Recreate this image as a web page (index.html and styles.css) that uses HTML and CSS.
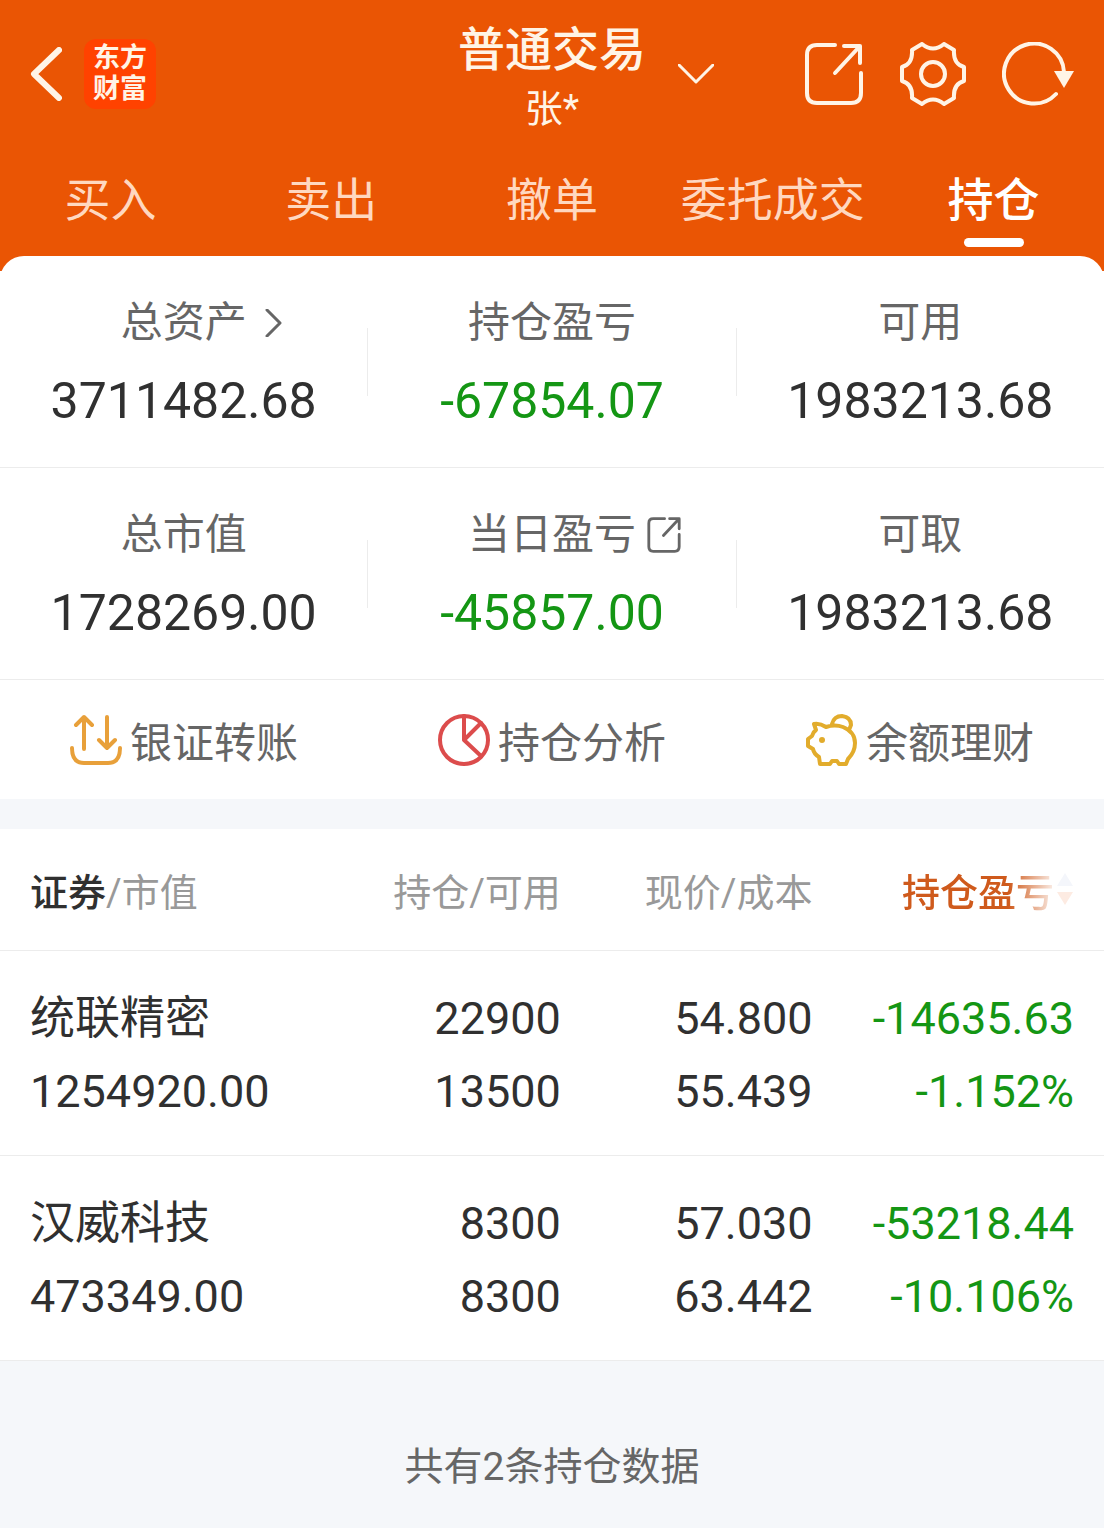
FILE: index.html
```html
<!DOCTYPE html>
<html lang="zh-CN">
<head>
<meta charset="utf-8">
<meta name="viewport" content="width=device-width, initial-scale=1">
<title>普通交易 - 持仓</title>
<link rel="stylesheet" href="styles.css">
</head>
<body>
<header class="header">
  <div class="topbar">
    <div class="topbar-left">
      <button type="button" class="icon-btn" aria-label="返回">
        <svg width="32" height="54" viewBox="0 0 32 54"><path d="M29 3 L4 27 L29 51" stroke-width="6"/></svg>
      </button>
      <a href="#" class="logo">东方<br>财富</a>
    </div>
    <button type="button" class="account">
      <span class="account-text">
        <span class="account-title">普通交易</span>
        <span class="account-name">张*</span>
      </span>
      <svg class="account-arrow" width="36" height="20" viewBox="0 0 36 20"><path d="M1 1 L18 18 L35 1" stroke-width="3"/></svg>
    </button>
    <div class="topbar-right">
      <button type="button" class="icon-btn" aria-label="分享">
        <svg width="60" height="64" viewBox="0 0 60 64"><path d="M31 3 H13 Q3 3 3 13 V51 Q3 61 13 61 H47 Q57 61 57 51 V31 M40 4 H56 V21 M56 4 L31 31" stroke-width="4"/></svg>
      </button>
      <button type="button" class="icon-btn" aria-label="设置">
        <svg width="66" height="64" viewBox="0 0 66 64"><path d="M22 2 Q33 11 44 2 L54 8 Q53 22 64 25 V39 Q53 42 54 56 L44 62 Q33 53 22 62 L12 56 Q13 42 2 39 V25 Q13 22 12 8 Z" stroke-width="4"/><circle cx="33" cy="32" r="12" stroke-width="4"/></svg>
      </button>
      <button type="button" class="icon-btn" aria-label="刷新">
        <svg width="72" height="64" viewBox="0 0 72 64"><path d="M54 52 A30 30 0 1 1 62 30" stroke-width="4"/><path class="solid" d="M52 29 H72 L62 46 Z"/></svg>
      </button>
    </div>
  </div>
  <nav class="tabs">
    <a href="#" class="tab">买入</a>
    <a href="#" class="tab">卖出</a>
    <a href="#" class="tab">撤单</a>
    <a href="#" class="tab">委托成交</a>
    <a href="#" class="tab active" aria-current="page">持仓</a>
  </nav>
</header>

<main class="panel">
  <!-- Account totals -->
  <section class="stats">
    <div class="stat">
      <a href="#" class="stat-label">总资产<svg class="stat-icon" width="36" height="28" viewBox="0 0 36 28"><path d="M10 1 L23 14 L10 27" stroke-width="3"/></svg></a>
      <span class="stat-value">3711482.68</span>
    </div>
    <span class="divider"></span>
    <div class="stat">
      <span class="stat-label">持仓盈亏</span>
      <span class="stat-value down">-67854.07</span>
    </div>
    <span class="divider"></span>
    <div class="stat">
      <span class="stat-label">可用</span>
      <span class="stat-value">1983213.68</span>
    </div>
  </section>
  <section class="stats">
    <div class="stat">
      <span class="stat-label">总市值</span>
      <span class="stat-value">1728269.00</span>
    </div>
    <span class="divider"></span>
    <div class="stat">
      <a href="#" class="stat-label">当日盈亏<svg class="stat-icon" width="36" height="36" viewBox="0 0 60 64"><path d="M31 3 H11 Q3 3 3 11 V53 Q3 61 11 61 H49 Q57 61 57 53 V31 M40 3 H57 V21 M56 4 L29 33" stroke-width="5"/></svg></a>
      <span class="stat-value down">-45857.00</span>
    </div>
    <span class="divider"></span>
    <div class="stat">
      <span class="stat-label">可取</span>
      <span class="stat-value">1983213.68</span>
    </div>
  </section>

  <nav class="shortcuts">
    <a href="#" class="shortcut">
      <svg class="transfer" width="52" height="52" viewBox="0 0 52 52"><path d="M14 35 V3 M6 11 L14 3 L22 11 M37 3 V34 M29 26 L37 34 L45 26 M2 34 Q2 49 14 49 H38 Q50 49 50 34" stroke-width="4"/></svg>
      银证转账
    </a>
    <a href="#" class="shortcut">
      <svg class="pie" width="52" height="52" viewBox="0 0 52 52"><circle cx="26" cy="26" r="24" stroke-width="4"/><path d="M26 2 V26 L43 9 M26 26 L43 42" stroke-width="4"/></svg>
      持仓分析
    </a>
    <a href="#" class="shortcut">
      <svg class="piggy" width="52" height="52" viewBox="0 0 52 52"><path d="M8 10 Q14 9 20 13 Q29 10 37 13 Q49 18 49 29 Q49 38 42 45 L40 50 H33 L31 47 H26 L24 50 H14 L13 43 Q8 40 7 35 L2 32 V25 L6 22 Q7 18 10 16 Z M26 10 Q28 2 36 2 Q45 3 45 11 L43 16" stroke-width="4"/><circle class="solid" cx="16" cy="26" r="3"/></svg>
      余额理财
    </a>
  </nav>

  <table class="holdings">
    <thead>
      <tr>
        <th class="col-name"><b>证券</b>/市值</th>
        <th class="col-amount">持仓/可用</th>
        <th class="col-price">现价/成本</th>
        <th class="col-profit">
          <button type="button" class="sort">
            <span class="sort-text">持仓盈亏</span>
            <svg width="18" height="36" viewBox="0 0 18 36"><path class="sort-up" d="M9 2 L17 15 H1 Z"/><path class="sort-down" d="M1 21 H17 L9 34 Z"/></svg>
          </button>
        </th>
      </tr>
    </thead>
    <tbody>
      <tr>
        <td>统联精密<br>1254920.00</td>
        <td>22900<br>13500</td>
        <td>54.800<br>55.439</td>
        <td class="down">-14635.63<br>-1.152%</td>
      </tr>
      <tr>
        <td>汉威科技<br>473349.00</td>
        <td>8300<br>8300</td>
        <td>57.030<br>63.442</td>
        <td class="down">-53218.44<br>-10.106%</td>
      </tr>
    </tbody>
  </table>
</main>

<footer class="footer">共有2条持仓数据</footer>
</body>
</html>
```

FILE: styles.css
```css
* {
  box-sizing: border-box;
}
body {
  display: flex;
  flex-direction: column;
  min-height: 100vh;
  margin: 0;
  background: #fff;
  color: #303030;
  font-family: Roboto, "Noto Sans CJK SC", sans-serif;
}
a {
  color: inherit;
  text-decoration: none;
}
button {
  padding: 0;
  border: 0;
  background: none;
  color: inherit;
  font: inherit;
  cursor: pointer;
}
svg {
  display: block;
  flex: none;
  fill: none;
  stroke: currentColor;
  stroke-linecap: round;
  stroke-linejoin: round;
}
.solid {
  fill: currentColor;
  stroke: none;
}

/* Header */
.header {
  padding-bottom: 24px;
  background: #ea5504;
  color: #fff4e6;
}
.topbar {
  display: grid;
  grid-template-columns: 1fr auto 1fr;
  align-items: center;
  height: 148px;
  padding: 0 30px;
}
.topbar-left {
  display: flex;
  align-items: center;
  gap: 22px;
}
.topbar-right {
  display: flex;
  align-items: center;
  justify-content: flex-end;
  gap: 36px;
}
.logo {
  padding: 4px 9px;
  border-radius: 12px;
  background: #ff4200;
  font-size: 27px;
  font-weight: 700;
  line-height: 31px;
}
.account {
  display: flex;
  align-items: center;
}
.account-text {
  display: flex;
  flex-direction: column;
  align-items: center;
  padding-top: 6px;
}
.account-title {
  font-size: 47px;
  font-weight: 500;
  line-height: 64px;
}
.account-name {
  font-size: 38px;
  line-height: 54px;
}
.account-arrow {
  margin: 0 -68px 0 32px;
}
.tabs {
  display: grid;
  grid-template-columns: repeat(5, 1fr);
  padding-top: 14px;
}
.tab {
  display: flex;
  flex-direction: column;
  align-items: center;
  color: #ffd8c0;
  font-size: 46px;
  line-height: 76px;
}
.tab::after {
  content: "";
  width: 60px;
  height: 9px;
  border-radius: 5px;
}
.tab.active {
  color: #fff;
  font-weight: 500;
}
.tab.active::after {
  background: #fff;
}

/* Account totals */
.panel {
  margin-top: -15px;
  border-radius: 24px 24px 0 0;
  background: #fff;
}
.stats {
  display: flex;
  align-items: center;
  height: 212px;
  border-bottom: 1px solid #ececec;
}
.stat {
  display: flex;
  flex: 1;
  flex-direction: column;
  align-items: center;
  gap: 18px;
}
.stat-label {
  display: flex;
  align-items: center;
  color: #666;
  font-size: 42px;
  line-height: 60px;
}
.stat-icon {
  margin: 0 -46px 0 10px;
}
.stat-value {
  font-size: 50px;
  line-height: 60px;
}
.divider {
  width: 1px;
  height: 68px;
  background: #ececec;
}
.down {
  color: #149614;
}

.shortcuts {
  display: grid;
  grid-template-columns: repeat(3, 1fr);
  height: 149px;
  border-bottom: 30px solid #f5f7fa;
}
.shortcut {
  display: flex;
  align-items: center;
  justify-content: center;
  gap: 8px;
  color: #666;
  font-size: 42px;
}
.transfer {
  color: #e8a03a;
}
.pie {
  color: #dc4c4c;
}
.piggy {
  color: #e2ac2c;
}

/* Holdings */
.holdings {
  width: 100%;
  border-collapse: collapse;
  table-layout: fixed;
}
.holdings th,
.holdings td {
  padding: 0;
  border-bottom: 1px solid #ececec;
  font-weight: 400;
  text-align: right;
}
.holdings th:first-child,
.holdings td:first-child {
  padding-left: 30px;
  text-align: left;
}
.holdings th:last-child,
.holdings td:last-child {
  padding-right: 30px;
}
.holdings th {
  height: 121px;
  color: #999;
  font-size: 38px;
}
.holdings td {
  height: 205px;
  padding-top: 4px;
  font-size: 45px;
  line-height: 73px;
}
.holdings b {
  color: #303030;
  font-weight: 500;
}
.col-name {
  width: 28.8%;
}
.col-amount {
  width: 22%;
}
.col-price {
  width: 22.8%;
}
.sort {
  display: inline-flex;
  align-items: center;
  gap: 2px;
  color: #cf5a1c;
  vertical-align: middle;
}
.sort-text {
  font-weight: 500;
  -webkit-mask-image: linear-gradient(to right, #000 70%, rgba(0, 0, 0, 0.1));
  mask-image: linear-gradient(to right, #000 70%, rgba(0, 0, 0, 0.1));
}
.sort-up {
  fill: #f4f6fb;
  stroke: none;
}
.sort-down {
  fill: #fdebe2;
  stroke: none;
}

.footer {
  flex: 1;
  padding: 76px 30px 30px;
  background: #f5f7fa;
  color: #666;
  font-size: 39px;
  line-height: 60px;
  text-align: center;
}
```
